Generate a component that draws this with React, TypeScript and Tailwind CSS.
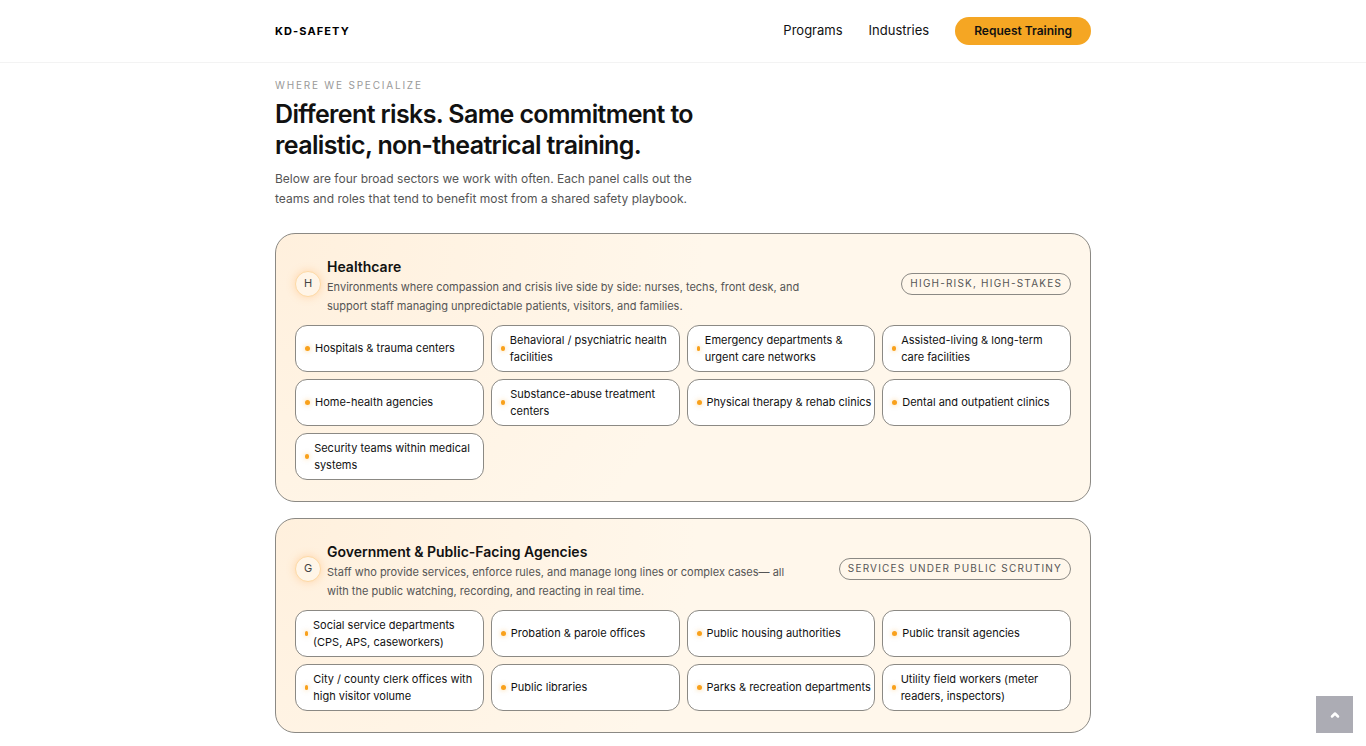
import { ChevronUp } from "lucide-react";

type Sector = {
  letter: string;
  title: string;
  description: string;
  tag: string;
  teams: string[];
};

const navLinks = [
  { label: "Programs", href: "#programs" },
  { label: "Industries", href: "#industries" },
];

const sectors: Sector[] = [
  {
    letter: "H",
    title: "Healthcare",
    description:
      "Environments where compassion and crisis live side by side: nurses, techs, front desk, and support staff managing unpredictable patients, visitors, and families.",
    tag: "High-risk, high-stakes",
    teams: [
      "Hospitals & trauma centers",
      "Behavioral / psychiatric health facilities",
      "Emergency departments & urgent care networks",
      "Assisted-living & long-term care facilities",
      "Home-health agencies",
      "Substance-abuse treatment centers",
      "Physical therapy & rehab clinics",
      "Dental and outpatient clinics",
      "Security teams within medical systems",
    ],
  },
  {
    letter: "G",
    title: "Government & Public-Facing Agencies",
    description:
      "Staff who provide services, enforce rules, and manage long lines or complex cases— all with the public watching, recording, and reacting in real time.",
    tag: "Services under public scrutiny",
    teams: [
      "Social service departments (CPS, APS, caseworkers)",
      "Probation & parole offices",
      "Public housing authorities",
      "Public transit agencies",
      "City / county clerk offices with high visitor volume",
      "Public libraries",
      "Parks & recreation departments",
      "Utility field workers (meter readers, inspectors)",
    ],
  },
];

function Header() {
  return (
    <header className="border-b border-[#f3f3f3] bg-white">
      <div className="mx-auto flex h-[62px] max-w-[816px] items-center justify-between">
        <a href="#top" className="text-[11px] font-bold tracking-widest text-black">
          KD-SAFETY
        </a>
        <nav className="flex items-center gap-[26px]">
          {navLinks.map((link) => (
            <a key={link.href} href={link.href} className="text-[13px] text-[#111]">
              {link.label}
            </a>
          ))}
          <a
            href="#request"
            className="flex h-7 items-center rounded-full bg-[#f5a623] px-[19px] text-[12px] font-semibold text-[#111]"
          >
            Request Training
          </a>
        </nav>
      </div>
    </header>
  );
}

function SectorPanel({ sector }: { sector: Sector }) {
  return (
    <article className="rounded-[20px] border border-[#8b8984] bg-[#fff7eb] bg-[radial-gradient(circle_at_top_left,#fff0dd,#fff7eb_50%)] px-[19px] pt-[23px] pb-[21px]">
      <div className="flex items-center justify-between gap-4">
        <div className="flex items-center gap-[6px]">
          <span className="mb-[6px] flex size-[26px] shrink-0 items-center justify-center rounded-full border border-[#fdd9a5] bg-[#fff5e8] text-[11px] text-[#444] shadow-[0_0_9px_rgba(255,160,70,0.35)]">
            {sector.letter}
          </span>
          <div>
            <h3 className="text-[14px] leading-[19px] font-semibold text-[#111]">{sector.title}</h3>
            <p className="max-w-[480px] pt-[2px] text-[11px] leading-[19px] text-[#555]">
              {sector.description}
            </p>
          </div>
        </div>
        <span className="mb-[6px] flex h-[22px] shrink-0 items-center rounded-full border border-[#8b8984] px-2 text-[10px] tracking-[0.12em] text-[#555] uppercase">
          {sector.tag}
        </span>
      </div>
      <ul className="mt-[9px] grid grid-cols-4 gap-[7px]">
        {sector.teams.map((team) => (
          <li
            key={team}
            className="flex min-h-[47px] items-center gap-[5px] rounded-xl border border-[#8b8984] bg-white pr-[2px] pl-[9px] text-[11px] leading-[17px] text-[#111]"
          >
            <span className="h-[5px] w-[5px] rounded-full bg-[#f9a11b] shadow-[0_0_5px_rgba(249,161,27,0.5)]" />
            <span>{team}</span>
          </li>
        ))}
      </ul>
    </article>
  );
}

export default function App() {
  return (
    <div id="top" className="min-h-screen bg-white font-[Inter,sans-serif]">
      <Header />
      <main className="mx-auto max-w-[816px] pt-[15px] pb-3">
        <div className="max-w-[430px]">
          <p className="text-[10px] leading-[14px] tracking-[0.18em] text-[#999] uppercase">
            Where we specialize
          </p>
          <h2 className="mt-[7px] text-[25px] leading-[31px] font-semibold tracking-tight text-[#111]">
            Different risks. Same commitment to realistic, non-theatrical training.
          </h2>
          <p className="mt-2 text-[12px] leading-[20px] text-[#555]">
            Below are four broad sectors we work with often. Each panel calls out the teams and
            roles that tend to benefit most from a shared safety playbook.
          </p>
        </div>
        <section className="mt-6 flex flex-col gap-4">
          {sectors.map((sector) => (
            <SectorPanel key={sector.letter} sector={sector} />
          ))}
        </section>
      </main>
      <button
        type="button"
        aria-label="Back to top"
        className="fixed right-[13px] bottom-[13px] flex size-[37px] items-center justify-center bg-[#acacb4] text-white"
      >
        <ChevronUp size={12} strokeWidth={5} />
      </button>
    </div>
  );
}
